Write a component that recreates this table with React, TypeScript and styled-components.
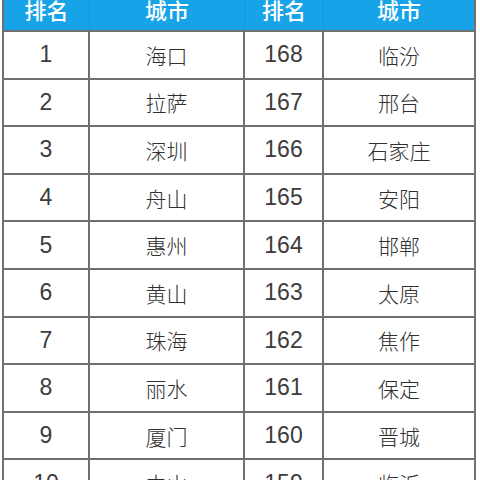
import styled, { createGlobalStyle } from "styled-components";

const GlobalStyle = createGlobalStyle`
  html, body {
    margin: 0;
    padding: 0;
    background: #ffffff;
    overflow: hidden;
  }
`;

interface RankRow {
  rank: string;
  city: string;
  rank2: string;
  city2: string;
}

const rows: RankRow[] = [
  { rank: "1", city: "海口", rank2: "168", city2: "临汾" },
  { rank: "2", city: "拉萨", rank2: "167", city2: "邢台" },
  { rank: "3", city: "深圳", rank2: "166", city2: "石家庄" },
  { rank: "4", city: "舟山", rank2: "165", city2: "安阳" },
  { rank: "5", city: "惠州", rank2: "164", city2: "邯郸" },
  { rank: "6", city: "黄山", rank2: "163", city2: "太原" },
  { rank: "7", city: "珠海", rank2: "162", city2: "焦作" },
  { rank: "8", city: "丽水", rank2: "161", city2: "保定" },
  { rank: "9", city: "厦门", rank2: "160", city2: "晋城" },
  { rank: "10", city: "中山", rank2: "159", city2: "临沂" },
];

const Page = styled.div`
  width: 480px;
  height: 480px;
  overflow: hidden;
  background: #fff;
`;

const Table = styled.div`
  margin: -10px 0 0 2px;
  width: 474px;
  border-left: 2px solid #707070;
  box-sizing: border-box;
`;

const Row = styled.div<{ $head?: boolean }>`
  display: grid;
  grid-template-columns: 86px 155px 79px 152px;
  height: ${p => (p.$head ? "42px" : "47.6px")};
  box-sizing: border-box;
  border-bottom: 2px solid #707070;
  background: ${p => (p.$head ? "#17a3e8" : "#fff")};
`;

const HeadCell = styled.div`
  display: flex;
  align-items: center;
  justify-content: center;
  padding-bottom: 3px;
  border-right: 1px solid #1a92d0;
  color: #ffffff;
  font-size: 22px;
  font-weight: 500;
  font-family: "Noto Sans CJK SC", sans-serif;
  &:last-child {
    border-right: 2px solid #707070;
  }
`;

const Cell = styled.div<{ $num?: boolean }>`
  display: flex;
  align-items: center;
  justify-content: center;
  border-right: 2px solid #707070;
  color: ${p => (p.$num ? "#3c3c3c" : "#303030")};
  font-size: ${p => (p.$num ? 23 : 21)}px;
  font-family: ${p =>
    p.$num
      ? `"Liberation Sans", sans-serif`
      : `"Noto Sans CJK SC", sans-serif`};
  font-weight: ${p => (p.$num ? 400 : 300)};
`;

export default function App() {
  return (
    <Page>
      <GlobalStyle />
      <Table>
        <Row $head>
          <HeadCell>排名</HeadCell>
          <HeadCell>城市</HeadCell>
          <HeadCell>排名</HeadCell>
          <HeadCell>城市</HeadCell>
        </Row>
        {rows.map(r => (
          <Row key={r.rank}>
            <Cell $num>{r.rank}</Cell>
            <Cell>{r.city}</Cell>
            <Cell $num>{r.rank2}</Cell>
            <Cell>{r.city2}</Cell>
          </Row>
        ))}
      </Table>
    </Page>
  );
}
